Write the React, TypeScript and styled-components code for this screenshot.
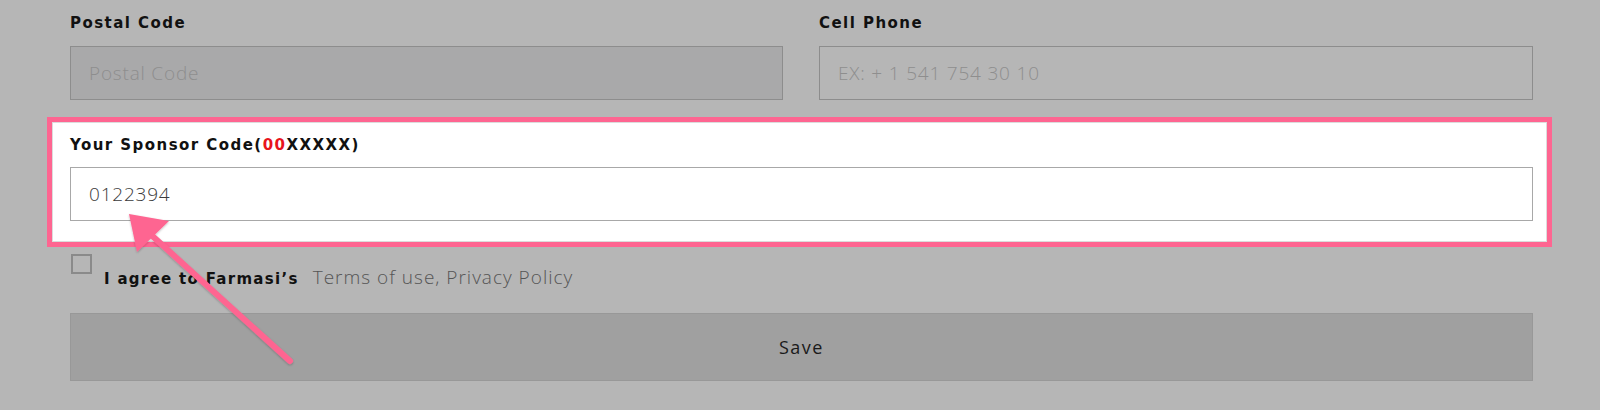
import React from 'react';
import styled, { createGlobalStyle } from 'styled-components';

const GlobalStyle = createGlobalStyle`
  html, body {
    margin: 0;
    padding: 0;
    background: #b6b6b6;
  }
  * {
    box-sizing: border-box;
  }
`;

const PINK = '#fe6591';

const App = () => {
  return (
    <Page>
      <GlobalStyle />
      <Form>
        <FieldRow>
          <Field>
            <Label>Postal Code</Label>
            <TextInput $variant="disabled" placeholder="Postal Code" readOnly />
          </Field>
          <Field>
            <Label>Cell Phone</Label>
            <TextInput placeholder="EX: + 1 541 754 30 10" readOnly />
          </Field>
        </FieldRow>

        <Highlight>
          <SponsorLabel>
            Your Sponsor Code(<Red>00</Red>XXXXX)
          </SponsorLabel>
          <TextInput $variant="white" value="0122394" readOnly />
        </Highlight>

        <AgreeRow>
          <Checkbox />
          <AgreeText>
            <AgreeStrong>I agree to Farmasi’s</AgreeStrong>
            <AgreeLink>Terms of use, Privacy Policy</AgreeLink>
          </AgreeText>
        </AgreeRow>

        <SaveButton>Save</SaveButton>
      </Form>

      <Arrow width="1600" height="410" viewBox="0 0 1600 410">
        <defs>
          <filter id="arrowShadow" x="-20%" y="-20%" width="140%" height="140%">
            <feDropShadow dx="0" dy="1" stdDeviation="1" floodColor="#000" floodOpacity="0.25" />
          </filter>
        </defs>
        <g filter="url(#arrowShadow)">
          <line x1="290" y1="361" x2="148" y2="232" stroke={PINK} strokeWidth="6" strokeLinecap="round" />
          <polygon points="129,214 169,221 137,252" fill={PINK} />
        </g>
      </Arrow>
    </Page>
  );
};

export default App;

const Page = styled.div`
  position: relative;
  width: 1600px;
  height: 410px;
  overflow: hidden;
  background: #b6b6b6;
`;

const Form = styled.div`
  width: 1463px;
  margin-left: 70px;
  padding-top: 12px;
  display: flex;
  flex-direction: column;
`;

const FieldRow = styled.div`
  display: grid;
  grid-template-columns: 713px 714px;
  column-gap: 36px;
`;

const Field = styled.div`
  display: flex;
  flex-direction: column;
`;

const Label = styled.div`
  font-family: 'DejaVu Sans', sans-serif;
  font-weight: 700;
  font-size: 15px;
  line-height: 22px;
  letter-spacing: 1.45px;
  color: #111;
  margin-bottom: 12px;
`;

const SponsorLabel = styled(Label)`
  margin-bottom: 11px;
`;

const Red = styled.span`
  color: #e8141c;
`;

type Variant = 'default' | 'disabled' | 'white';

const inputBg: Record<Variant, string> = {
  default: '#b6b6b6',
  disabled: '#a9a9aa',
  white: '#ffffff',
};

const TextInput = styled.input<{ $variant?: Variant }>`
  height: 54px;
  width: 100%;
  padding: 0 18px;
  border: 1px solid ${(p) => (p.$variant === 'white' ? '#a8a8a8' : '#8d8d8d')};
  background: ${(p) => inputBg[p.$variant || 'default']};
  font-family: 'Open Sans', sans-serif;
  font-weight: 300;
  font-size: 19px;
  letter-spacing: 0.8px;
  color: #3a3a3a;
  outline: none;

  &::placeholder {
    color: #8e8e8e;
  }
`;

const Highlight = styled.div`
  margin: 17px -19px 0 -23px;
  padding: 12px 14px 21px 18px;
  border: 5px solid ${PINK};
  background: #fff;
  box-shadow: inset 0 0 0 1px #dcdcdc;
  display: flex;
  flex-direction: column;
`;

const AgreeRow = styled.div`
  display: flex;
  align-items: flex-start;
  margin-top: 7px;
  padding-left: 1px;
`;

const Checkbox = styled.div`
  width: 21px;
  height: 20px;
  border: 2px solid #8a8a8a;
  flex-shrink: 0;
`;

const AgreeText = styled.div`
  margin-top: 13px;
  margin-left: 12px;
  display: flex;
  align-items: baseline;
  gap: 14px;
  line-height: 20px;
`;

const AgreeStrong = styled.span`
  font-family: 'DejaVu Sans', sans-serif;
  font-weight: 700;
  font-size: 15px;
  letter-spacing: 1.3px;
  color: #111;
`;

const AgreeLink = styled.span`
  font-family: 'Open Sans', sans-serif;
  font-weight: 300;
  font-size: 19px;
  letter-spacing: 1px;
  color: #555;
`;

const SaveButton = styled.button`
  margin-top: 24px;
  height: 68px;
  width: 100%;
  background: #a0a0a0;
  border: 1px solid #989898;
  font-family: 'Open Sans', sans-serif;
  font-size: 18px;
  letter-spacing: 1.5px;
  color: #1a1a1a;
  cursor: pointer;
`;

const Arrow = styled.svg`
  position: absolute;
  left: 0;
  top: 0;
  pointer-events: none;
`;
